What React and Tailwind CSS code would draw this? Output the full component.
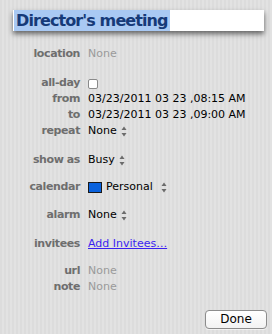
import React from "react";

const Stepper = () => (
  <svg width="6" height="11" viewBox="0 0 6 11" className="inline-block">
    <path d="M3 0.5 L5.5 4 L0.5 4 Z" fill="#6b6b6b" />
    <path d="M3 10.5 L5.5 7 L0.5 7 Z" fill="#6b6b6b" />
  </svg>
);

const Row = ({ label, children, className = "" }) => (
  <div className={"flex items-center h-[16px] " + className}>
    <div className="w-[80px] text-right font-bold text-[#6e6e6e] tracking-[-0.4px] shrink-0">{label}</div>
    <div className="ml-[8px] flex items-center">{children}</div>
  </div>
);

export default function App() {
  return (
    <div
      className="w-[272px] h-[334px] relative overflow-hidden bg-[repeating-linear-gradient(90deg,#dcdcdc_0px,#dcdcdc_2px,#e2e2e2_2px,#e2e2e2_4px)] text-[11px] text-black"
      style={{ fontFamily: '"DejaVu Sans", "Noto Sans", sans-serif' }}
    >
      <div className="pt-[10px] pl-[13px] pr-[8px]">
        <div className="h-[21px] bg-white shadow-[0_3px_5px_rgba(0,0,0,0.55)] flex items-center pl-[1px]">
          <span className="bg-[#a9c9f3] text-[#163a78] font-bold text-[16px] leading-[21px] px-[2px] tracking-[-0.9px]">
            Director's meeting
          </span>
        </div>
      </div>

      <div className="flex flex-col">
        <Row label="location" className="mt-[15px]">
          <span className="text-[#9a9a9a]">None</span>
        </Row>
        <Row label="all-day" className="mt-[14px] !h-[15px]">
          <span className="w-[10px] h-[10px] rounded-[2px] border border-[#8a8a8a] bg-white inline-block" />
        </Row>
        <Row label="from">
          <span>03/23/2011 03 23 ,08:15 AM</span>
        </Row>
        <Row label="to">
          <span>03/23/2011 03 23 ,09:00 AM</span>
        </Row>
        <Row label="repeat">
          <span>None</span>
          <span className="ml-[4px] flex"><Stepper /></span>
        </Row>
        <Row label="show as" className="mt-[13px]">
          <span>Busy</span>
          <span className="ml-[4px] flex"><Stepper /></span>
        </Row>
        <Row label="calendar" className="mt-[11px]">
          <span className="w-[14px] h-[11px] bg-[#0a62dd] border border-[#1a1a1a] inline-block" />
          <span className="ml-[4px]">Personal</span>
          <span className="ml-[8px] flex"><Stepper /></span>
        </Row>
        <Row label="alarm" className="mt-[12px]">
          <span>None</span>
          <span className="ml-[4px] flex"><Stepper /></span>
        </Row>
        <Row label="invitees" className="mt-[13px]">
          <span className="text-[#3b1ff0] underline">Add Invitees…</span>
        </Row>
        <Row label="url" className="mt-[11px]">
          <span className="text-[#9a9a9a]">None</span>
        </Row>
        <Row label="note">
          <span className="text-[#9a9a9a]">None</span>
        </Row>
      </div>

      <div className="flex justify-end pr-[5px] mt-[15px]">
        <button className="w-[62px] h-[19px] rounded-[4px] border border-[#8c8c8c] bg-[linear-gradient(#ffffff,#f2f2f2)] text-[12px] leading-[17px] text-black shadow-[0_1px_0_rgba(255,255,255,0.6)]">
          Done
        </button>
      </div>
    </div>
  );
}
